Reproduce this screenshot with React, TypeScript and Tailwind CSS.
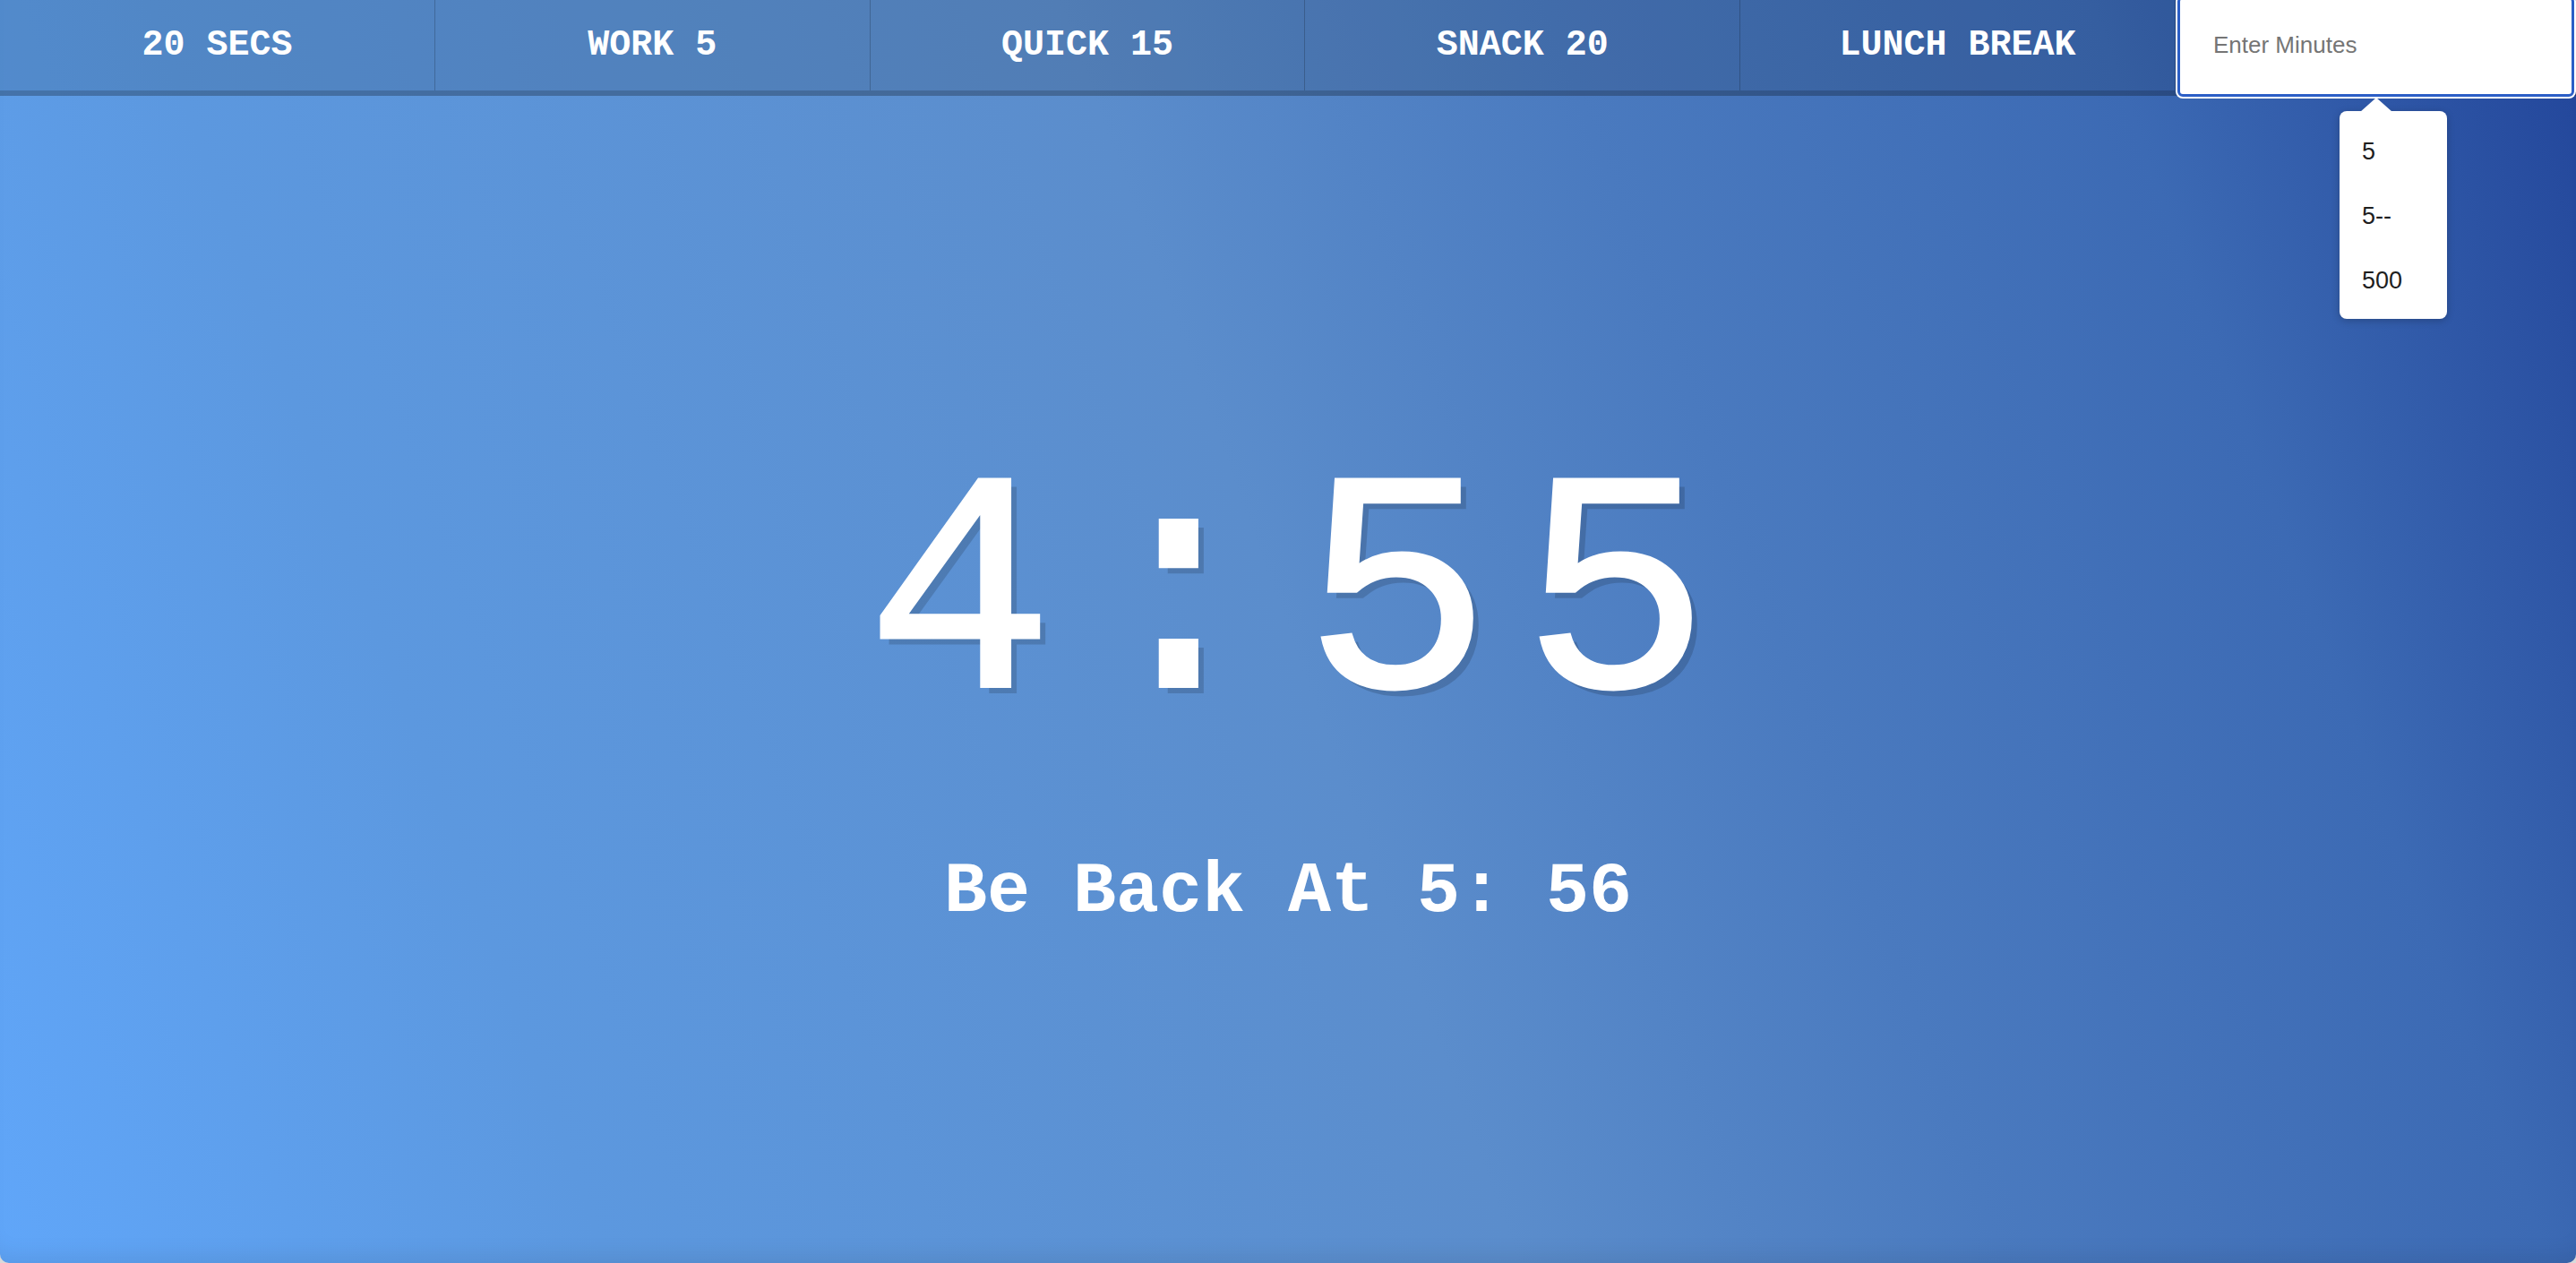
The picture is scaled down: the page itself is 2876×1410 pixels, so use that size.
import React from "react";

const buttons = ["20 SECS", "WORK 5", "QUICK 15", "SNACK 20", "LUNCH BREAK"];
const options = ["5", "5--", "500"];

export default function App() {
  return (
    <div className="w-full h-[1410px] bg-[#d9d9d9] overflow-hidden">
      <div className="relative w-full h-full flex flex-col rounded-b-[10px] overflow-hidden bg-[linear-gradient(70deg,#60a6f9_0%,#5c98df_20%,#5b8dcc_50%,#4a7abf_66%,#3c6ab4_84%,#22459a_100%)] shadow-[inset_0_-24px_24px_-16px_rgba(0,0,0,0.08)]">
        <nav className="relative z-10 flex h-[107px] shrink-0 items-stretch bg-black/[0.11] border-b-[6px] border-black/[0.17]">
          {buttons.map((b) => (
            <div
              key={b}
              className="flex-1 flex items-center justify-center border-r border-black/[0.2] text-white text-[40px] font-bold font-['Liberation_Mono','Courier_New',monospace] leading-none"
            >
              {b}
            </div>
          ))}
          <div className="relative w-[447px] shrink-0 self-start -mt-[4px]">
            <div className="ml-[2px] mr-[2px] h-[112px] bg-white border-[3px] border-[#2b5ec6] rounded-[6px] shadow-[0_0_0_2px_#ffffff] flex items-center pl-[37px] pb-[4px]">
              <span className="text-[26px] text-[#757575] font-['Liberation_Sans',Arial,sans-serif] leading-none">
                Enter Minutes
              </span>
            </div>
            <div className="absolute left-[183px] top-[128px] w-[120px] bg-white rounded-[8px] shadow-[0_2px_8px_rgba(0,0,0,0.22)] pt-[9px] pb-[7px]">
              <svg
                className="absolute left-[23px] -top-[15px]"
                width="36"
                height="16"
                viewBox="0 0 36 16"
              >
                <polygon points="0,16 18,0 36,16" fill="#ffffff" />
              </svg>
              {options.map((o) => (
                <div
                  key={o}
                  className="h-[72px] flex items-center pl-[25px] text-[27px] text-[#1f1f1f] font-['Liberation_Sans',Arial,sans-serif] leading-none"
                >
                  {o}
                </div>
              ))}
            </div>
          </div>
        </nav>
        <main className="flex-1 flex flex-col items-center justify-center pt-[17px] text-white font-['Liberation_Mono','Courier_New',monospace]">
          <div className="text-[350px] leading-none tracking-[34px] pl-[34px] [-webkit-text-stroke:4px_#ffffff] [text-shadow:8px_8px_0_rgba(0,0,0,0.15)]">
            4:55
          </div>
          <div className="mt-[108px] text-[80px] font-bold leading-none">
            Be Back At 5: 56
          </div>
        </main>
      </div>
    </div>
  );
}
